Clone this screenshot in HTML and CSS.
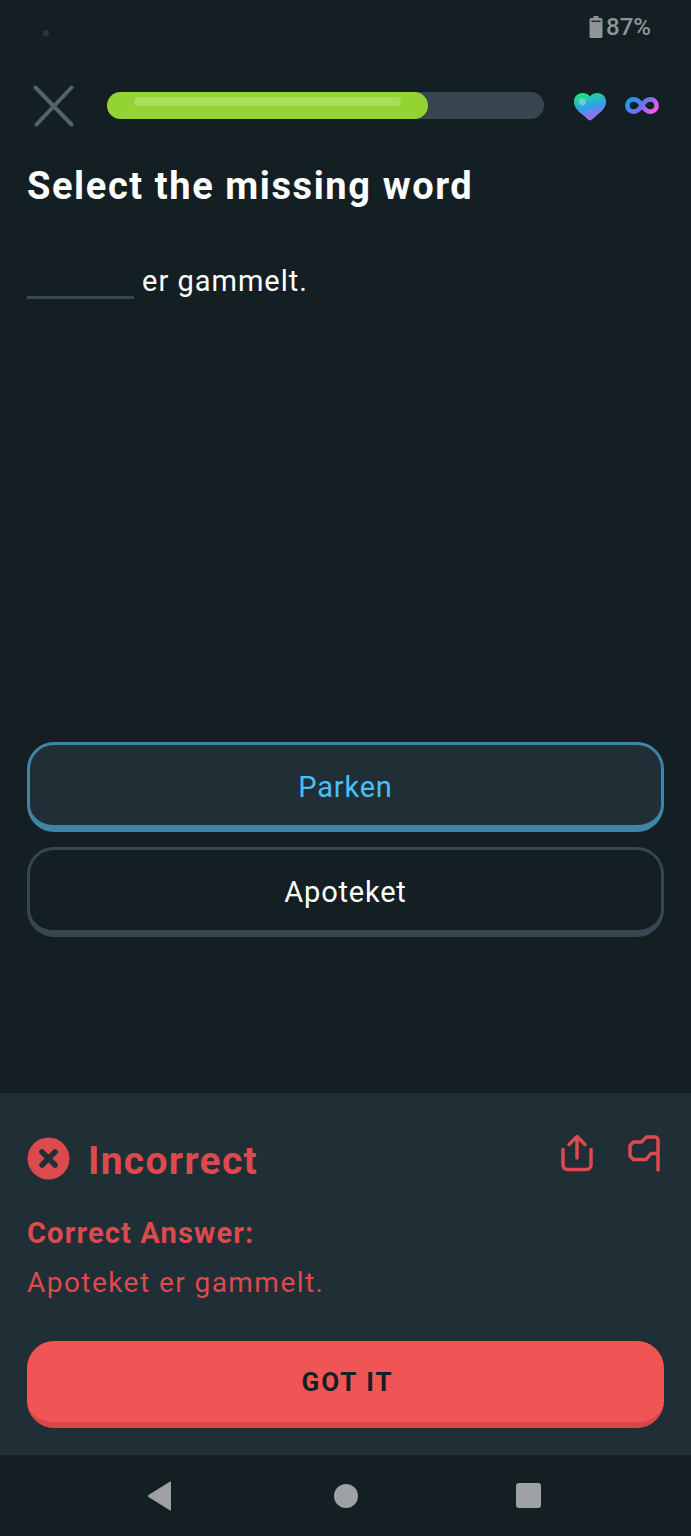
FILE: index.html
```html
<!DOCTYPE html>
<html lang="en">
<head>
<meta charset="UTF-8">
<meta name="viewport" content="width=device-width, initial-scale=1.0">
<title>Select the missing word</title>
<link rel="stylesheet" href="styles.css">
</head>
<body>
<div class="screen">
  <div class="status">
    <span class="status-dot"></span>
    <div class="battery">
      <svg width="14" height="24" viewBox="0 0 14 24"><path fill="#8f9496" d="M4.500 1h5v2h2.500a1.500 1.500 0 0 1 1.500 1.500v17a1.500 1.500 0 0 1-1.500 1.500h-10a1.500 1.500 0 0 1-1.500-1.500v-17a1.500 1.500 0 0 1 1.500-1.500h2.500z"/><rect x="2.500" y="5.500" width="9" height="1.600" fill="#2a3338"/></svg>
      <span>87%</span>
    </div>
  </div>

  <div class="topbar">
    <svg class="close" width="42" height="42" viewBox="0 0 42 42"><path d="M2.500 2.500 L38.500 39.500 M38.500 2.500 L3.500 39.500" stroke="#52656d" stroke-width="4" stroke-linecap="round" fill="none"/></svg>
    <div class="progress">
      <div class="progress-fill"><div class="progress-shine"></div></div>
    </div>
    <svg class="heart" width="34" height="29" viewBox="0 0 36 32" preserveAspectRatio="none">
      <defs>
        <linearGradient id="heartGrad" x1="0.3" y1="0" x2="0.6" y2="1">
          <stop offset="0" stop-color="#1de57a"/>
          <stop offset="0.5" stop-color="#2fa0ea"/>
          <stop offset="1" stop-color="#c65af7"/>
        </linearGradient>
      </defs>
      <path fill="url(#heartGrad)" d="M18 31.500 C16.800 31.500 15.500 30 13 27.700 C7 22.500 1 18 1 10.500 C1 5 5 1 10 1 C13.500 1 16.500 2.500 18 5 C19.500 2.500 22.500 1 26 1 C31 1 35 5 35 10.500 C35 18 29 22.500 23 27.700 C20.500 30 19.200 31.500 18 31.500 Z"/>
      <circle cx="10" cy="11" r="3.800" fill="#ffffff" opacity="0.3"/>
    </svg>
    <svg class="infinity" width="34" height="17" viewBox="0 0 34 17">
      <defs>
        <linearGradient id="infGrad" x1="0" y1="0.3" x2="1" y2="0.7">
          <stop offset="0" stop-color="#1c9cf0"/>
          <stop offset="0.55" stop-color="#7a6cf5"/>
          <stop offset="1" stop-color="#f25de0"/>
        </linearGradient>
      </defs>
      <path fill="none" stroke="url(#infGrad)" stroke-width="4.600" d="M17 8.500 C14.500 4.500 12 2.400 8.500 2.400 C5 2.400 2.400 5 2.400 8.500 C2.400 12 5 14.600 8.500 14.600 C12 14.600 14.500 12.500 17 8.500 C19.500 4.500 22 2.400 25.500 2.400 C29 2.400 31.600 5 31.600 8.500 C31.600 12 29 14.600 25.500 14.600 C22 14.600 19.500 12.500 17 8.500 Z"/>
    </svg>
  </div>

  <h1 class="title">Select the missing word</h1>

  <div class="sentence">
    <span class="blank"></span>
    <span>er gammelt.</span>
  </div>

  <div class="choices">
    <button class="choice selected" type="button">Parken</button>
    <button class="choice" type="button">Apoteket</button>
  </div>

  <div class="feedback">
    <div class="feedback-head">
      <svg class="wrong-icon" width="43" height="43" viewBox="0 0 43 43"><circle cx="21.500" cy="21.500" r="21" fill="#dd4a4d"/><path d="M15 15 L28 28 M28 15 L15 28" stroke="#202f36" stroke-width="5.500" stroke-linecap="round"/></svg>
      <span class="feedback-title">Incorrect</span>
      <div class="feedback-actions">
        <svg width="32" height="38" viewBox="0 0 32 38" fill="none" stroke="#dd4a4d" stroke-width="3.500" stroke-linecap="round" stroke-linejoin="round"><path d="M16 24V3 M8 10.500 L16 2.500 L24 10.500 M2 15.500V31a4.500 4.500 0 0 0 4.500 4.500h19a4.500 4.500 0 0 0 4.500-4.500V15.500"/></svg>
        <svg width="34" height="38" viewBox="0 0 34 38" fill="none" stroke="#dd4a4d" stroke-width="3.500" stroke-linecap="round" stroke-linejoin="round"><path d="M30 36V6a3 3 0 0 0-3-3H18.500L13.500 8H5.500L2 11.500V22L5.500 25.500H18L23 19.500H30"/></svg>
      </div>
    </div>
    <div class="answer-label">Correct Answer:</div>
    <div class="answer-text">Apoteket er gammelt.</div>
    <button class="got-it" type="button">GOT IT</button>
  </div>

  <div class="navbar">
    <svg width="26" height="30" viewBox="0 0 26 30"><path fill="#9ea2a5" d="M24 1.500 V28.500 Q24 30 22.800 29.200 L1.500 16 Q0 15 1.500 14 L22.800 0.800 Q24 0 24 1.500 Z"/></svg>
    <span class="nav-circle"></span>
    <span class="nav-square"></span>
  </div>
</div>
</body>
</html>
```

FILE: styles.css
```css
body {
  margin: 0;
  padding: 0;
  background-color: #141f24;
  font-family: "Roboto", "Liberation Sans", sans-serif;
  color: #fff;
}
.screen {
  width: 691px;
  height: 1536px;
  display: flex;
  flex-direction: column;
  overflow: hidden;
}
.status {
  height: 64px;
  padding: 13px 40px 0 43px;
  box-sizing: border-box;
  display: flex;
  justify-content: space-between;
  align-items: flex-start;
}
.status-dot {
  width: 6px;
  height: 6px;
  margin-top: 17px;
  border-radius: 50%;
  background-color: #2a353a;
}
.battery {
  display: flex;
  align-items: center;
  gap: 3px;
  color: #8f9496;
  font-size: 24px;
  font-weight: 500;
}
.topbar {
  height: 44px;
  margin-top: 20px;
  padding: 0 32px 0 33px;
  display: flex;
  align-items: center;
}
.close {
  flex: none;
}
.progress {
  width: 437px;
  height: 27px;
  margin-left: 32px;
  margin-bottom: 1px;
  border-radius: 14px;
  background-color: #37464f;
}
.progress-fill {
  width: 321px;
  height: 27px;
  padding: 5px 27px 0;
  box-sizing: border-box;
  border-radius: 14px;
  background-color: #93d333;
}
.progress-shine {
  height: 9px;
  border-radius: 5px;
  background-color: #a9dd5c;
}
.heart {
  margin-left: 29px;
}
.infinity {
  margin-left: 18px;
  margin-bottom: 2px;
}
.title {
  margin: 33px 0 0 27px;
  font-size: 38px;
  line-height: 50px;
  font-weight: 700;
  letter-spacing: 1.6px;
}
.sentence {
  margin: 48px 0 0 27px;
  height: 44px;
  display: flex;
  align-items: center;
  gap: 8px;
  font-size: 29px;
  letter-spacing: 1px;
}
.blank {
  width: 107px;
  height: 36px;
  border-bottom: 3px solid #37464f;
  box-sizing: border-box;
}
.choices {
  margin: 439px 27px 0;
  display: flex;
  flex-direction: column;
  gap: 15px;
}
.choice {
  height: 90px;
  padding: 4px 0 0;
  box-sizing: border-box;
  border: 3px solid #37464f;
  border-bottom-width: 7px;
  border-radius: 27px;
  background-color: transparent;
  color: #fff;
  font-family: inherit;
  font-size: 29px;
  letter-spacing: 0.8px;
  cursor: pointer;
}
.choice.selected {
  border-color: #3f85a7;
  background-color: #202f36;
  color: #49c0f8;
}
.feedback {
  margin-top: 156px;
  height: 362px;
  padding: 0 27px;
  box-sizing: border-box;
  background-color: #202f36;
  color: #dd4a4d;
}
.feedback-head {
  height: 108px;
  padding-top: 12px;
  display: flex;
  align-items: center;
}
.wrong-icon {
  margin-bottom: 2px;
}
.feedback-title {
  margin-left: 18px;
  margin-top: 4px;
  font-size: 39px;
  font-weight: 700;
  letter-spacing: 1.3px;
}
.feedback-actions {
  margin-left: auto;
  margin-right: 2px;
  margin-top: -12px;
  display: flex;
  gap: 35px;
}
.answer-label {
  font-size: 29px;
  line-height: 40px;
  font-weight: 700;
  letter-spacing: 1.15px;
}
.answer-text {
  margin-top: 10px;
  font-size: 28px;
  line-height: 40px;
  letter-spacing: 1.45px;
}
.got-it {
  display: block;
  width: 100%;
  height: 87px;
  margin-top: 38px;
  padding: 0 0 0 4px;
  border: none;
  border-bottom: 6px solid #d84848;
  border-radius: 27px;
  box-sizing: border-box;
  background-color: #f05555;
  color: #151f24;
  font-family: inherit;
  font-size: 26px;
  font-weight: 700;
  letter-spacing: 2px;
  cursor: pointer;
}
.navbar {
  flex: 1;
  padding: 0 150px 0 147px;
  display: flex;
  justify-content: space-between;
  align-items: center;
}
.nav-circle {
  width: 24px;
  height: 24px;
  margin-left: 2px;
  border-radius: 50%;
  background-color: #9ea2a5;
}
.nav-square {
  width: 25px;
  height: 25px;
  border-radius: 3px;
  background-color: #9ea2a5;
}
```
